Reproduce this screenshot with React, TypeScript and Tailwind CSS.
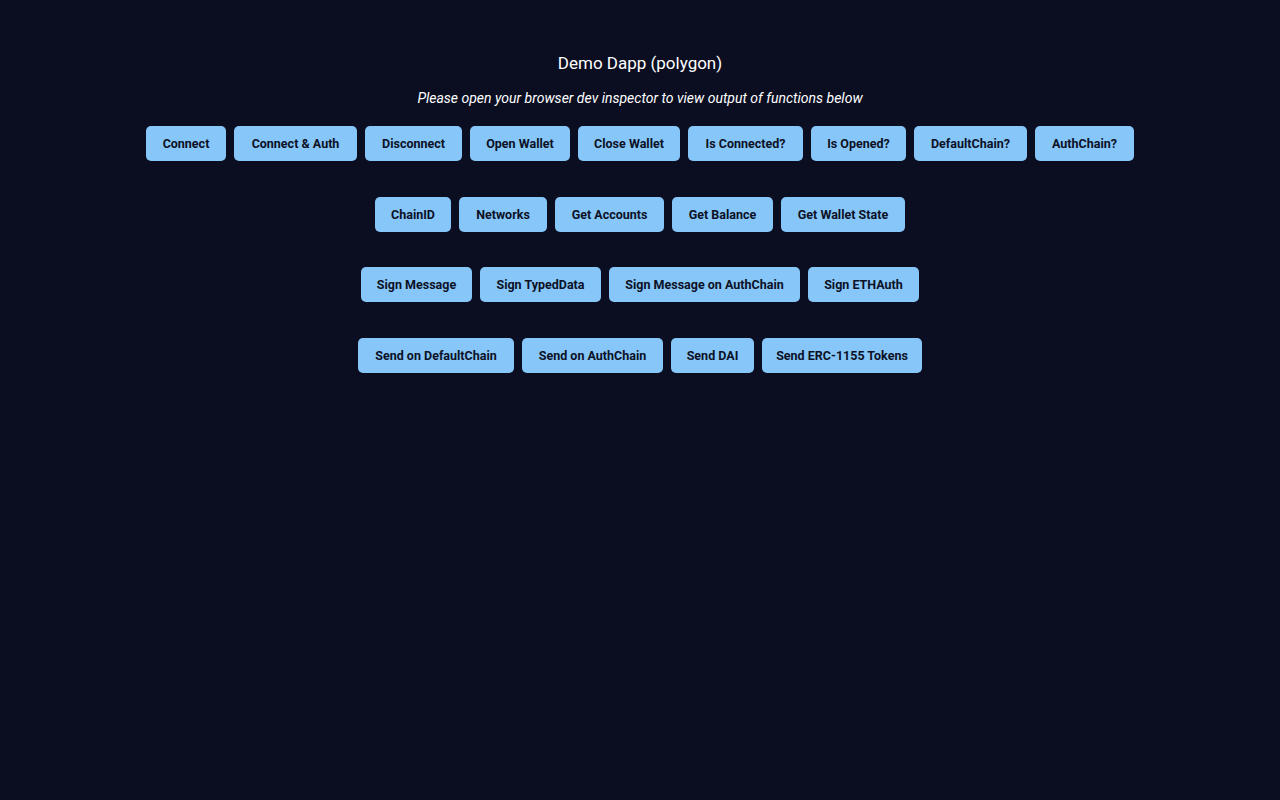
const rows: [string, number][][] = [
  [
    ["Connect", 80],
    ["Connect & Auth", 123],
    ["Disconnect", 97],
    ["Open Wallet", 100],
    ["Close Wallet", 102],
    ["Is Connected?", 115],
    ["Is Opened?", 95],
    ["DefaultChain?", 113],
    ["AuthChain?", 99],
  ],
  [
    ["ChainID", 76],
    ["Networks", 88],
    ["Get Accounts", 109],
    ["Get Balance", 101],
    ["Get Wallet State", 124],
  ],
  [
    ["Sign Message", 111],
    ["Sign TypedData", 121],
    ["Sign Message on AuthChain", 191],
    ["Sign ETHAuth", 111],
  ],
  [
    ["Send on DefaultChain", 156],
    ["Send on AuthChain", 141],
    ["Send DAI", 83],
    ["Send ERC-1155 Tokens", 160],
  ],
];

const rowMargins = ["mt-[18px]", "mt-[36px]", "mt-[35px]", "mt-[36px]"];

export default function App() {
  return (
    <div
      className="min-h-[800px] w-full bg-[#0b0e21] flex flex-col items-center"
      style={{ fontFamily: "Roboto, 'Liberation Sans', sans-serif" }}
    >
      <h1 className="mt-[50px] h-[27px] leading-[27px] text-[17px] text-white font-normal">
        Demo Dapp (polygon)
      </h1>
      <p className="mt-[11px] leading-[20px] text-[14px] italic text-white">
        Please open your browser dev inspector to view output of functions below
      </p>
      {rows.map((row, i) => (
        <div key={i} className={`${rowMargins[i]} flex gap-2`}>
          {row.map(([label, w]) => (
            <button
              key={label}
              style={{ width: w }}
              className="h-[35px] pt-[2px] rounded-[5px] bg-[#86c6f8] text-[#0c1126] text-[12.5px] font-bold whitespace-nowrap flex items-center justify-center"
            >
              {label}
            </button>
          ))}
        </div>
      ))}
    </div>
  );
}
